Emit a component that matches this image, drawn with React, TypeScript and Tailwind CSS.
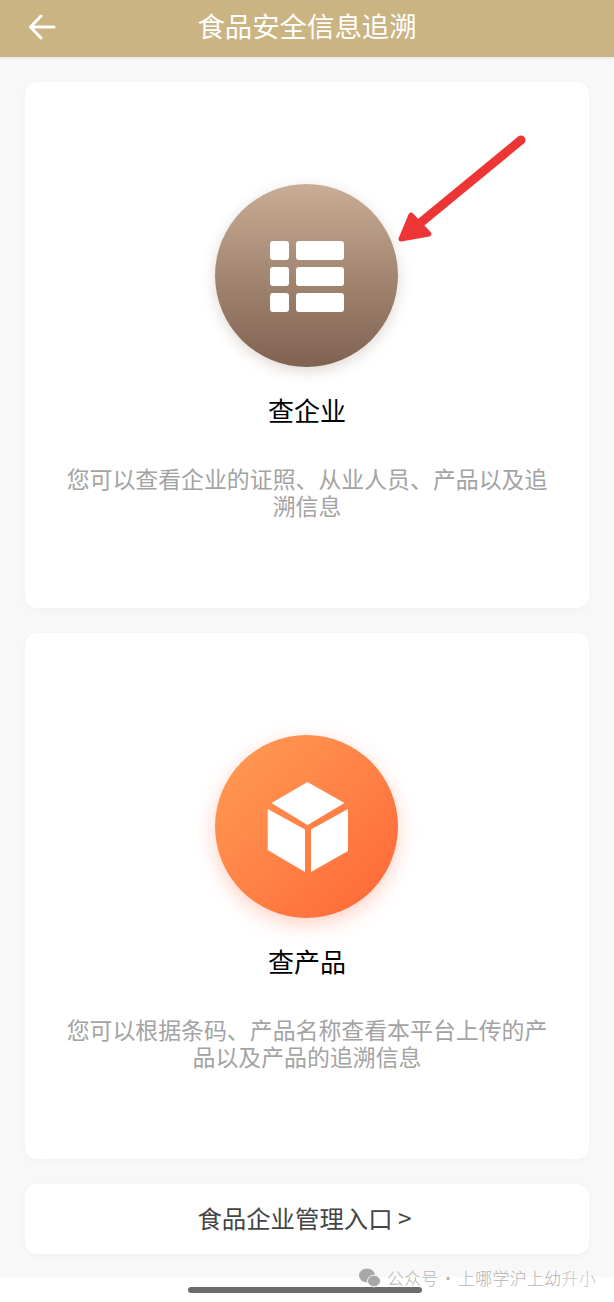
const fontCn = "font-['Noto_Sans_CJK_SC','Noto_Sans',sans-serif]";

function ListIcon() {
  return (
    <svg className="ml-[1px] mt-[2px]" width="74" height="71" viewBox="0 0 74 71" fill="#fff">
      <rect x="0" y="0" width="19" height="19" rx="3" />
      <rect x="26" y="0" width="48" height="19" rx="3" />
      <rect x="0" y="26" width="19" height="19" rx="3" />
      <rect x="26" y="26" width="48" height="19" rx="3" />
      <rect x="0" y="52" width="19" height="19" rx="3" />
      <rect x="26" y="52" width="48" height="19" rx="3" />
    </svg>
  );
}

function BoxIcon() {
  return (
    <svg className="ml-[1px]" width="81" height="90" viewBox="0 0 81 90" fill="#fff">
      <path d="M40.5 0 L77.5 21 L40.5 43 L4.5 21 Z" />
      <path d="M0.7 27 L38 47.5 L38 90 L0.7 68 Z" />
      <path d="M81 27 L44 47.5 L44 90 L81 69 Z" />
    </svg>
  );
}

function Card({ icon, circle, title, desc }: { icon: React.ReactNode; circle: string; title: string; desc: string }) {
  return (
    <div className="h-[526px] rounded-xl bg-white pt-[102px] shadow-[0_2px_10px_rgba(0,0,0,0.03)] flex flex-col items-center">
      <div className={`-ml-[1px] w-[183px] h-[183px] rounded-full flex items-center justify-center ${circle}`}>{icon}</div>
      <h2 className="mt-[24px] text-[26px] leading-[38px] font-normal text-black">{title}</h2>
      <p className="mt-[36px] px-[38px] text-center text-[22.9px] leading-[27px] text-[#a3a3a3]">{desc}</p>
    </div>
  );
}

export default function App() {
  return (
    <div className={`relative w-[614px] h-[1302px] overflow-hidden bg-white ${fontCn}`}>
      <header className="relative h-[57px] pb-[5px] bg-[#cab482] flex items-center justify-center shadow-[0_1px_3px_rgba(0,0,0,0.1)]">
        <button className="absolute left-[28px] top-[14px]">
          <svg width="28" height="26" viewBox="0 0 28 26" fill="none" stroke="#fff" strokeWidth="3" strokeLinecap="round" strokeLinejoin="round">
            <path d="M26 13 H3 M13 2 L2.5 13 L13 24" />
          </svg>
        </button>
        <h1 className="text-[27.4px] font-normal text-white">食品安全信息追溯</h1>
      </header>

      <main className="h-[1220px] bg-[#f8f8f8] px-[25px] pt-[25px] flex flex-col gap-[25px]">
        <Card
          circle="bg-gradient-to-b from-[#c9ad96] to-[#7f6250] shadow-[0_4px_14px_rgba(127,98,80,0.25)]"
          icon={<ListIcon />}
          title="查企业"
          desc="您可以查看企业的证照、从业人员、产品以及追溯信息"
        />
        <Card
          circle="bg-gradient-to-br from-[#ff9c55] to-[#ff6536] shadow-[0_6px_20px_rgba(255,101,54,0.3)]"
          icon={<BoxIcon />}
          title="查产品"
          desc="您可以根据条码、产品名称查看本平台上传的产品以及产品的追溯信息"
        />
        <div className="h-[70px] pr-[5px] pb-[2px] rounded-xl bg-white shadow-[0_2px_10px_rgba(0,0,0,0.03)] flex items-center justify-center text-[24.4px] text-[#444444]">
          食品企业管理入口 &gt;
        </div>
      </main>

      {/* annotation arrow over the first card */}
      <svg className="absolute left-[395px] top-[132px]" width="135" height="115" viewBox="0 0 135 115" fill="#ee3535">
        <path d="M126 8 L24 92" stroke="#ee3535" strokeWidth="9" strokeLinecap="round" />
        <path d="M6 107 L16 83 L34 102 Z" stroke="#ee3535" strokeWidth="5" strokeLinejoin="round" />
      </svg>

      {/* home indicator */}
      <div className="absolute left-[188px] top-[1287px] w-[234px] h-[6px] rounded-full bg-[#6b6b6b]" />

      {/* watermark */}
      <div className="absolute left-[359px] top-[1266px] flex items-center text-[17px] leading-[24px] font-light text-[#b5b5b5]">
        <svg className="mr-[6px]" width="22" height="20" viewBox="0 0 22 20" fill="#a8a8a8">
          <ellipse cx="8" cy="7.5" rx="8" ry="7" />
          <ellipse cx="15" cy="13" rx="6.5" ry="5.8" stroke="#f8f8f8" strokeWidth="1" />
        </svg>
        <span className="whitespace-nowrap">公众号</span>
        <span className="w-[20px] text-center">·</span>
        <span className="whitespace-nowrap tracking-[0.25px]">
          上哪学沪上幼<span className="text-[#c9c9c9]">升小</span>
        </span>
      </div>
    </div>
  );
}
